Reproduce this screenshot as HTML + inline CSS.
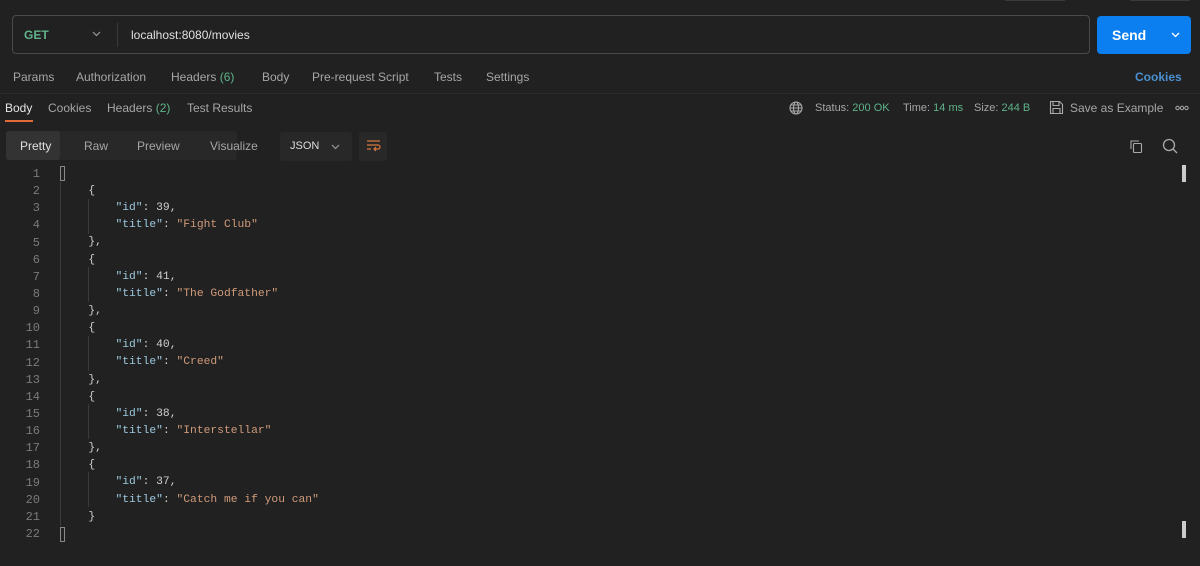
<!DOCTYPE html>
<html><head><style>
body{margin:0;width:1200px;height:566px;background:#212121;font-family:"Liberation Sans",sans-serif;color:#a6a6a6;position:relative;overflow:hidden;font-size:12px}
.a{position:absolute;white-space:nowrap}
.url{left:12px;top:15px;width:1078px;height:39px;border:1px solid #4a4a4a;border-radius:4px;box-sizing:border-box}
.send{left:1097px;top:16px;width:94px;height:38px;background:#0c7ff0;border-radius:4px;color:#fff;font-weight:bold;font-size:14px}
.g{color:#5fb38a}
.code{font-family:"Liberation Mono",monospace;font-size:12px}
.k{color:#9cc8de}.s{color:#d09a7a}
</style></head><body>
<div class="a" style="left:1005px;top:0;width:60px;height:1px;background:#3a3a3a"></div>
<div class="a" style="left:1130px;top:0;width:60px;height:1px;background:#3a3a3a"></div>
<div class="a url"></div>
<div class="a g" style="left:24px;top:28px;font-weight:bold;font-size:12px">GET</div>
<svg class="a" style="left:92px;top:31px" width="9" height="6" viewBox="0 0 9 6" fill="none" stroke="#999" stroke-width="1.2"><path d="M1 1l3.5 3.5L8 1"/></svg>
<div class="a" style="left:117px;top:23px;width:1px;height:24px;background:#3a3a3a"></div>
<div class="a" style="left:131px;top:28px;color:#e0e0e0;font-size:12px">localhost:8080/movies</div>
<div class="a send"><span class="a" style="left:15px;top:11px">Send</span><svg class="a" style="left:74px;top:16px" width="9" height="6" viewBox="0 0 9 6" fill="none" stroke="#fff" stroke-width="1.3"><path d="M1 1l3.5 3.5L8 1"/></svg></div>
<div class="a" style="left:13px;top:70px">Params</div>
<div class="a" style="left:76px;top:70px">Authorization</div>
<div class="a" style="left:171px;top:70px">Headers <span class="g">(6)</span></div>
<div class="a" style="left:262px;top:70px">Body</div>
<div class="a" style="left:312px;top:70px">Pre-request Script</div>
<div class="a" style="left:434px;top:70px">Tests</div>
<div class="a" style="left:486px;top:70px">Settings</div>
<div class="a" style="left:1135px;top:70px;color:#4a90d0;font-weight:bold">Cookies</div>
<div class="a" style="left:0;top:93px;width:1200px;height:1px;background:#2c2c2c"></div>
<div class="a" style="left:5px;top:101px;color:#e6e6e6">Body</div>
<div class="a" style="left:5px;top:120px;width:28px;height:2px;background:#e06a3a"></div>
<div class="a" style="left:48px;top:101px">Cookies</div>
<div class="a" style="left:107px;top:101px">Headers <span class="g">(2)</span></div>
<div class="a" style="left:187px;top:101px">Test Results</div>
<svg class="a" style="left:789px;top:101px" width="14" height="14" viewBox="0 0 14 14" fill="none" stroke="#aaa" stroke-width="1.1"><circle cx="7" cy="7" r="6"/><ellipse cx="7" cy="7" rx="2.5" ry="6"/><path d="M1 7h12M2 4h10M2 10h10"/></svg>
<div class="a" style="left:815px;top:102px;font-size:11px">Status: <span class="g">200 OK</span></div>
<div class="a" style="left:903px;top:102px;font-size:11px">Time: <span class="g">14 ms</span></div>
<div class="a" style="left:974px;top:102px;font-size:11px">Size: <span class="g">244 B</span></div>
<svg class="a" style="left:1049px;top:100px" width="15" height="15" viewBox="0 0 15 15" fill="none" stroke="#aaa" stroke-width="1.1"><path d="M1.5 1.5h9l3 3v9h-12z M4 1.5v4h6v-4 M4 13.5v-5h7v5"/></svg>
<div class="a" style="left:1070px;top:101px">Save as Example</div>
<svg class="a" style="left:1175px;top:105px" width="14" height="6" viewBox="0 0 14 6" fill="none" stroke="#aaa" stroke-width="1"><circle cx="2.5" cy="3" r="1.7"/><circle cx="7" cy="3" r="1.7"/><circle cx="11.5" cy="3" r="1.7"/></svg>
<div class="a" style="left:6px;top:131px;width:231px;height:29px;background:#282828;border-radius:3px"></div>
<div class="a" style="left:6px;top:131px;width:54px;height:29px;background:#333;border-radius:3px"></div>
<div class="a" style="left:20px;top:139px;color:#e0e0e0">Pretty</div>
<div class="a" style="left:84px;top:139px">Raw</div>
<div class="a" style="left:137px;top:139px">Preview</div>
<div class="a" style="left:210px;top:139px">Visualize</div>
<div class="a" style="left:280px;top:132px;width:72px;height:29px;background:#282828;border-radius:3px"></div>
<div class="a" style="left:290px;top:140px;color:#ddd;font-size:11px">JSON</div>
<svg class="a" style="left:331px;top:144px" width="9" height="6" viewBox="0 0 9 6" fill="none" stroke="#999" stroke-width="1.2"><path d="M1 1l3.5 3.5L8 1"/></svg>
<div class="a" style="left:359px;top:132px;width:28px;height:29px;background:#282828;border-radius:3px"></div>
<svg class="a" style="left:366px;top:139px" width="15" height="14" viewBox="0 0 15 14" fill="none" stroke="#d9773f" stroke-width="1.2"><path d="M1 2h13M1 6h11a2 2 0 0 1 0 4H8M10 8l-2 2 2 2M1 10h4"/></svg>
<svg class="a" style="left:1129px;top:139px" width="15" height="15" viewBox="0 0 15 15" fill="none" stroke="#aaa" stroke-width="1.1"><rect x="4.5" y="4.5" width="8" height="9" rx="1"/><path d="M2 10V2h8"/></svg>
<svg class="a" style="left:1162px;top:138px" width="16" height="16" viewBox="0 0 16 16" fill="none" stroke="#aaa" stroke-width="1.3"><circle cx="7" cy="7" r="5.5"/><path d="M11 11l4 4"/></svg>
<div class="a" style="left:1182px;top:165px;width:4px;height:17px;background:#ccc"></div>
<div class="a" style="left:1182px;top:521px;width:4px;height:17px;background:#ccc"></div>
<div class="a" style="left:60px;top:166px;width:5px;height:15px;border:1px solid #888;box-sizing:border-box"></div>
<div class="a" style="left:60px;top:527px;width:5px;height:15px;border:1px solid #888;box-sizing:border-box"></div>
<div class="a" style="left:60px;top:182px;width:1px;height:344px;background:#3a3a3a"></div>
<div class="a" style="left:88px;top:199px;width:1px;height:35px;background:#3a3a3a"></div>
<div class="a" style="left:88px;top:267px;width:1px;height:35px;background:#3a3a3a"></div>
<div class="a" style="left:88px;top:336px;width:1px;height:35px;background:#3a3a3a"></div>
<div class="a" style="left:88px;top:404px;width:1px;height:35px;background:#3a3a3a"></div>
<div class="a" style="left:88px;top:472px;width:1px;height:35px;background:#3a3a3a"></div>
<div class="a code" style="left:0;top:166px;line-height:17.14px;width:40px;text-align:right;color:#7a7a7a;white-space:normal">1<br>2<br>3<br>4<br>5<br>6<br>7<br>8<br>9<br>10<br>11<br>12<br>13<br>14<br>15<br>16<br>17<br>18<br>19<br>20<br>21<br>22</div>
<pre class="a code" style="left:68px;top:183px;font-size:11.3px;line-height:17.14px;margin:0;color:#cfcfcf;white-space:pre">   {
       <span class="k">"id"</span>: 39,
       <span class="k">"title"</span>: <span class="s">"Fight Club"</span>
   },
   {
       <span class="k">"id"</span>: 41,
       <span class="k">"title"</span>: <span class="s">"The Godfather"</span>
   },
   {
       <span class="k">"id"</span>: 40,
       <span class="k">"title"</span>: <span class="s">"Creed"</span>
   },
   {
       <span class="k">"id"</span>: 38,
       <span class="k">"title"</span>: <span class="s">"Interstellar"</span>
   },
   {
       <span class="k">"id"</span>: 37,
       <span class="k">"title"</span>: <span class="s">"Catch me if you can"</span>
   }</pre>
</body></html>
